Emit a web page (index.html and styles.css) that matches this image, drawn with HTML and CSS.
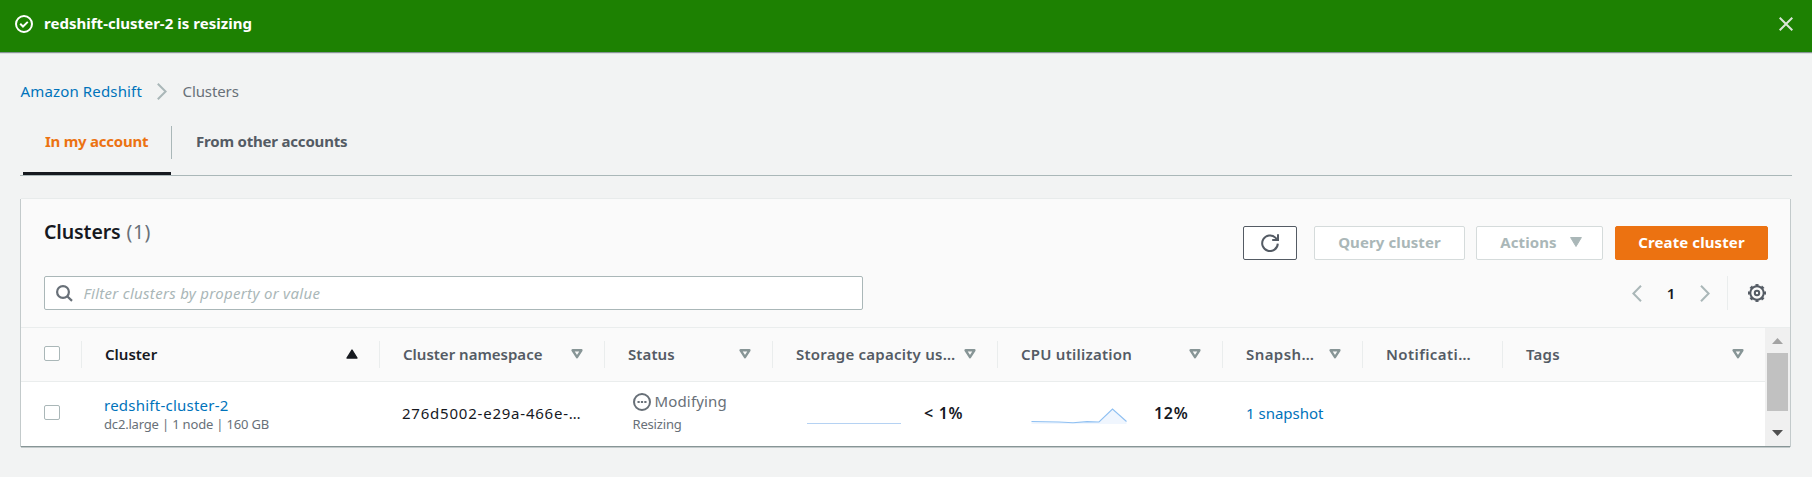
FILE: index.html
```html
<!DOCTYPE html>
<html lang="en">
<head>
<meta charset="utf-8">
<title>Amazon Redshift - Clusters</title>
<link rel="stylesheet" href="styles.css">
</head>
<body>
<svg class="defs" width="0" height="0">
  <symbol id="sort" viewBox="0 0 12 10"><path d="M1.6 1.3h8.8L6 8.2z" fill="none" stroke="#879596" stroke-width="2.4" stroke-linejoin="round"/></symbol>
</svg>
<div class="banner">
  <svg class="banner-icon" width="18" height="18" viewBox="0 0 18 18" fill="none" stroke="#fff" stroke-width="2"><circle cx="9" cy="9" r="8"/><path d="M5.2 8.8l2.8 2.7 4.8-4.6"/></svg>
  <span class="banner-text">redshift-cluster-2 is resizing</span>
  <svg class="close" width="14" height="14" viewBox="0 0 14 14" fill="none" stroke="#dbe6d8" stroke-width="2"><path d="M.7.7l12.6 12.6M13.3.7L.7 13.3"/></svg>
</div>
<nav class="crumbs">
  <a class="link crumb-root">Amazon Redshift</a>
  <svg width="10" height="17" viewBox="0 0 10 17" fill="none" stroke="#aab7b8" stroke-width="2"><path d="M.8.8L8.6 8.5.8 16.2"/></svg>
  <span class="crumb-current">Clusters</span>
</nav>
<div class="tabs">
  <div class="tab tab-active"><span>In my account</span></div>
  <div class="tab tab-other"><span>From other accounts</span></div>
</div>
<section class="card">
  <header class="card-head">
    <h2 class="title">Clusters <span class="count">(1)</span></h2>
    <div class="actions">
      <button class="btn btn-refresh"><svg width="18" height="18" viewBox="0 0 18 18" fill="none" stroke="#545b64" stroke-width="2"><path d="M16.8 9.6A7.8 7.8 0 1 1 14.4 3.6L16 5.4"/><path d="M17 .3V6h-5.8"/></svg></button>
      <button class="btn btn-query">Query cluster</button>
      <button class="btn btn-actions">Actions<svg width="12" height="10" viewBox="0 0 12 10"><path d="M.6.5h10.8L6 9.5z" fill="#aab7b8" stroke="#aab7b8" stroke-linejoin="round"/></svg></button>
      <button class="btn btn-create">Create cluster</button>
    </div>
  </header>
  <div class="tools">
    <div class="search">
      <svg width="17" height="17" viewBox="0 0 17 17" fill="none" stroke="#687078" stroke-width="2.2"><circle cx="7" cy="7" r="5.9"/><path d="M11.2 11.2l4.8 4.7"/></svg>
      <span class="placeholder">Filter clusters by property or value</span>
    </div>
    <div class="pager">
      <svg width="10" height="17" viewBox="0 0 10 17" fill="none" stroke="#aab7b8" stroke-width="2"><path d="M9 .8L1.4 8.5 9 16.2"/></svg>
      <span class="page">1</span>
      <svg width="10" height="17" viewBox="0 0 10 17" fill="none" stroke="#aab7b8" stroke-width="2"><path d="M1 .8l7.6 7.7L1 16.2"/></svg>
      <span class="pager-gear"><svg width="18" height="18" viewBox="0 0 18 18" fill="none" stroke="#545b64" stroke-width="2"><circle cx="9" cy="9" r="6.7"/><circle cx="9" cy="9" r="8" pathLength="80" stroke-dasharray="5 5" stroke-dashoffset="2.5"/><circle cx="9" cy="9" r="2.2"/></svg></span>
    </div>
  </div>
  <div class="table-wrap">
    <div class="table">
      <div class="row head">
        <div class="cell cell-check"><i class="box"></i></div>
        <div class="cell sorted"><span>Cluster</span><svg width="12" height="10" viewBox="0 0 12 10"><path d="M6 1l5 8H1z" fill="#16191f" stroke="#16191f" stroke-width="1.4" stroke-linejoin="round"/></svg></div>
        <div class="cell"><span>Cluster namespace</span><svg width="12" height="10"><use href="#sort"/></svg></div>
        <div class="cell"><span class="ls-s">Status</span><svg width="12" height="10"><use href="#sort"/></svg></div>
        <div class="cell"><span class="ls-m">Storage capacity us…</span><svg width="12" height="10"><use href="#sort"/></svg></div>
        <div class="cell"><span class="ls-m">CPU utilization</span><svg width="12" height="10"><use href="#sort"/></svg></div>
        <div class="cell"><span class="ls-l">Snapsh…</span><svg width="12" height="10"><use href="#sort"/></svg></div>
        <div class="cell"><span class="ls-l">Notificati…</span></div>
        <div class="cell"><span class="ls-m">Tags</span><svg width="12" height="10"><use href="#sort"/></svg></div>
      </div>
      <div class="row data">
        <div class="cell cell-check"><i class="box"></i></div>
        <div class="cell cell-name"><a class="link ls-m">redshift-cluster-2</a><small class="spec">dc2.large | 1 node | 160 GB</small></div>
        <div class="cell"><span class="ns">276d5002-e29a-466e-…</span></div>
        <div class="cell cell-status">
          <div class="state"><svg width="18" height="18" viewBox="0 0 18 18"><circle cx="9" cy="9" r="8" fill="none" stroke="#687078" stroke-width="2"/><path d="M4.5 8h2.2v2H4.5zM7.9 8h2.2v2H7.9zM11.3 8h2.2v2h-2.2z" fill="#687078"/></svg><span>Modifying</span></div>
          <small class="substate">Resizing</small>
        </div>
        <div class="cell cell-storage"><svg width="94" height="20" viewBox="0 0 94 20"><path d="M0 19.5h94" stroke="#b5d2f3"/></svg><b>&lt; 1%</b></div>
        <div class="cell cell-cpu"><svg width="96" height="20" viewBox="0 0 96 20"><path d="M.5 17.5L28 18l14 .8L56 17.6l12 .4L81.5 5l14 12.5V20H.5z" fill="#f0f6fe"/><path d="M.5 17.5L28 18l14 .8L56 17.6l12 .4L81.5 5l14 12.5" fill="none" stroke="#8fc0f2" stroke-width="1.1"/></svg><b>12%</b></div>
        <div class="cell"><a class="link">1 snapshot</a></div>
        <div class="cell"></div>
        <div class="cell"></div>
      </div>
    </div>
    <div class="scroll">
      <svg width="11" height="6" viewBox="0 0 11 6"><path d="M5.5 0L11 6H0z" fill="#a3a3a3"/></svg>
      <div class="thumb"></div>
      <svg class="down" width="11" height="6" viewBox="0 0 11 6"><path d="M0 0h11L5.5 6z" fill="#505050"/></svg>
    </div>
  </div>
</section>
</body>
</html>
```
FILE: styles.css
```css
* { box-sizing: border-box; }
body {
  margin: 0;
  height: 477px;
  overflow: hidden;
  background: #f2f3f3;
  color: #16191f;
  font: 15px/20px "Noto Sans", sans-serif;
}
svg { display: block; flex: none; }
.defs { display: none; }
.link { color: #0073bb; }

.banner {
  display: flex;
  align-items: flex-start;
  height: 53px;
  padding: 13px 19px 0 15px;
  background: #1d8102;
  border-bottom: 1px solid #879596;
  box-shadow: 0 1px 0 #dcdfdf;
  color: #fff;
}
.banner-icon { margin-top: 2px; }
.banner-text { margin-left: 11px; font-weight: 700; letter-spacing: .03px; }
.close { margin: 4px 0 0 auto; }

.crumbs { display: flex; align-items: center; height: 20px; margin: 28px 0 0 20.5px; }
.crumb-root { width: 136.5px; letter-spacing: .15px; }
.crumb-current { margin-left: 15.5px; color: #687078; letter-spacing: -.1px; }

.tabs {
  display: flex;
  height: 50px;
  margin: 25px 20px 0;
  padding-left: 3px;
  border-bottom: 1px solid #aab7b8;
}
.tab { font-weight: 700; line-height: 20px; padding-top: 5px; }
.tab-active {
  width: 148px;
  padding-left: 22px;
  border-bottom: 3px solid #16191f;
  color: #ec7211;
  letter-spacing: -.25px;
}
.tab-other {
  height: 33px;
  padding-left: 24px;
  border-left: 1px solid #aab7b8;
  color: #545b64;
  letter-spacing: -.2px;
}

.card {
  width: 1769px;
  height: 248px;
  margin: 23px 0 0 21px;
  background: #fafafa;
  border-bottom: 1px solid #879596;
  box-shadow: 0 -1px 0 #e8ebeb, -1px 0 0 #c3cacb, 1px 0 0 #c3cacb, 0 1px 0 #c3cacb;
}
.card-head { display: flex; justify-content: space-between; height: 61px; padding: 27px 22px 0 23px; }
.title { margin: -7px 0 0; font-size: 19.5px; line-height: 26px; font-weight: 600; letter-spacing: -.1px; }
.count { font-weight: 400; color: #687078; letter-spacing: .5px; margin-left: 1px; }
.actions { display: flex; }
.btn {
  display: flex;
  align-items: center;
  justify-content: center;
  height: 34px;
  padding: 0 0 2px;
  border: 1px solid #d5dbdb;
  border-radius: 2px;
  background: #fff;
  color: #aab7b8;
  font: 700 15px/20px "Noto Sans", sans-serif;
  letter-spacing: .1px;
}
.btn-refresh { width: 54px; margin-right: 17px; padding-bottom: 0; border-color: #545b64; }
.btn-query { width: 151px; margin-right: 11px; }
.btn-actions { width: 127px; margin-right: 12px; padding-left: 3px; gap: 13px; }
.btn-create { width: 153px; background: #ec7211; border-color: #ec7211; color: #fff; }

.tools { display: flex; justify-content: space-between; height: 67px; padding: 16px 24px 17px 23px; }
.search {
  display: flex;
  align-items: center;
  width: 819px;
  padding-left: 11px;
  border: 1px solid #aab7b8;
  border-radius: 2px;
  background: #fff;
}
.placeholder { margin-left: 10.5px; color: #aab7b8; font-style: italic; letter-spacing: .3px; }
.pager { display: flex; align-items: center; }
.page { width: 58px; text-align: center; font-size: 15px; font-weight: 600; }
.pager-gear {
  display: flex;
  align-items: center;
  height: 34px;
  margin-left: 17px;
  padding-left: 20px;
  border-left: 1px solid #eaeded;
}

.table-wrap { display: flex; height: 119px; border-top: 1px solid #eaeded; }
.table { width: 1744px; }
.row { display: grid; grid-template-columns: 60px 298px 225px 168px 225px 225px 140px 140px 263px; }
.head { height: 54px; border-bottom: 1px solid #eaeded; color: #545b64; font-weight: 600; }
.head .cell {
  display: flex;
  align-items: center;
  justify-content: space-between;
  height: 27px;
  margin-top: 13px;
  padding: 0 21px 2px 23px;
  border-left: 1px solid #eaeded;
  white-space: nowrap;
}
.head .sorted { color: #16191f; }
.head .cell-check { padding: 0 0 2px 23px; border: 0; }
.box { width: 16px; height: 15px; border: 1px solid #aab7b8; border-radius: 2px; background: #fff; }
.data { height: 64px; background: #fff; }
.data .cell { display: flex; align-items: center; padding: 0 0 3px 24px; white-space: nowrap; }
.data .cell-check { padding-left: 23px; }
.data .cell-name, .data .cell-status { flex-direction: column; align-items: flex-start; justify-content: center; }
.data .cell-name { padding: 0 0 0 23px; }
.spec, .substate { font-size: 13px; line-height: 18px; color: #687078; letter-spacing: -.18px; }
.ns { margin-left: -1px; letter-spacing: .78px; }
.data .cell-status { padding: 0 0 4px 28.5px; gap: 4px; }
.state { display: flex; align-items: center; gap: 4px; height: 20px; color: #687078; letter-spacing: .15px; }
.state svg { margin-top: 2px; }
.cell b { font-size: 16px; font-weight: 600; letter-spacing: .7px; }
.data .cell-storage { padding-left: 35px; gap: 23px; }
.data .cell-cpu { padding-left: 34px; gap: 27px; }
.cell-storage svg, .cell-cpu svg { margin-top: 2px; }
.ls-s { letter-spacing: .1px; }
.ls-m { letter-spacing: .24px; }
.ls-l { letter-spacing: .42px; }

.scroll { display: flex; flex-direction: column; align-items: center; width: 25px; padding: 10px 0 10px; background: #f0f0f0; }
.thumb { width: 21px; height: 58px; margin-top: 9px; background: #c1c1c1; }
.down { margin-top: auto; }
```
